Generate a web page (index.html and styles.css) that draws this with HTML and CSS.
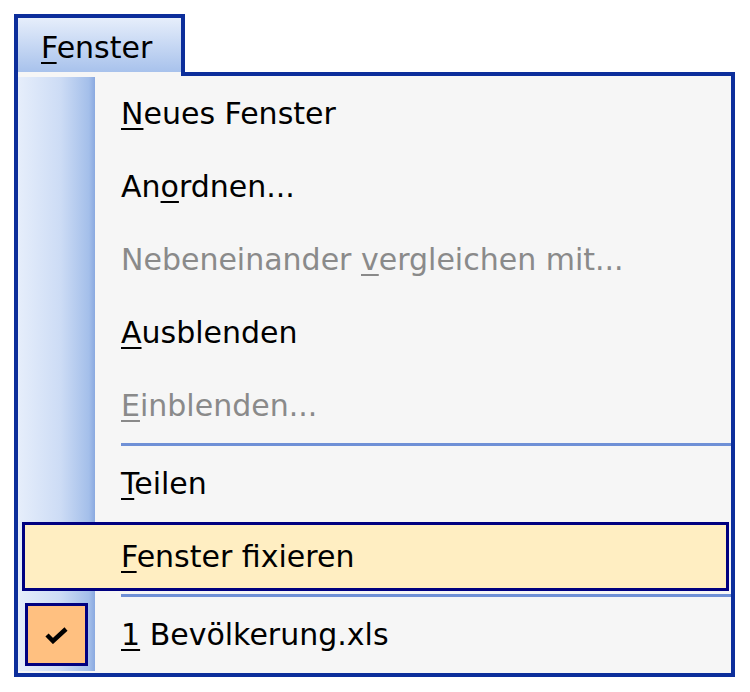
FILE: index.html
```html
<!DOCTYPE html>
<html lang="de">
<head>
    <meta charset="UTF-8">
    <title>Fenster-Menü</title>
    <link rel="stylesheet" href="styles.css">
</head>
<body>
    <div class="menubar">
        <div class="tab"><u>F</u>enster</div>
    </div>

    <div class="menu">
        <ul class="items">
            <li class="item"><span class="icon-cell"></span><span><u>N</u>eues Fenster</span></li>
            <li class="item"><span class="icon-cell"></span><span>An<u>o</u>rdnen...</span></li>
            <li class="item disabled"><span class="icon-cell"></span><span>Nebeneinander <u>v</u>ergleichen mit...</span></li>
            <li class="item"><span class="icon-cell"></span><span><u>A</u>usblenden</span></li>
            <li class="item disabled"><span class="icon-cell"></span><span><u>E</u>inblenden...</span></li>
            <li class="separator"></li>
            <li class="item"><span class="icon-cell"></span><span><u>T</u>eilen</span></li>
            <li class="item active"><span class="icon-cell"></span><span><u>F</u>enster fixieren</span></li>
            <li class="separator"></li>
            <li class="item">
                <span class="icon-cell checked">
                    <svg width="23" height="18" viewBox="0 0 23 18">
                        <path d="M2 9 L8 15 L21 3" fill="none" stroke="#000" stroke-width="4.5"/>
                    </svg>
                </span>
                <span><u>1</u> Bevölkerung.xls</span>
            </li>
        </ul>
    </div>
</body>
</html>
```

FILE: styles.css
```css
body {
    margin: 0;
    padding: 14px;
    background-color: #ffffff;
    font-family: "DejaVu Sans", Verdana, sans-serif;
    font-size: 30px;
    color: #000;
}
u {
    text-decoration-thickness: 2px;
    text-underline-offset: 4px;
}
.menubar {
    display: flex;
}
.tab {
    position: relative;
    z-index: 1;
    box-sizing: border-box;
    width: 171px;
    height: 62px;
    margin-bottom: -4px;
    padding: 12px 0 0 23px;
    border: 4px solid #0c2e9b;
    border-bottom: none;
    /* bottom 4px stays light so the tab opens into the menu */
    background: linear-gradient(#e6eefb, #a8c2ec calc(100% - 4px), #f6f6f6 calc(100% - 4px));
}
.menu {
    box-sizing: border-box;
    width: 721px;
    height: 605px;
    border: 4px solid #0c2e9b;
    background-color: #f6f6f6;
}
.items {
    display: flex;
    flex-direction: column;
    list-style: none;
    margin: 0;
    padding: 1px 0 2px 0;
    /* blue icon gutter on the left */
    background: linear-gradient(to right, #e6eefb, #cddcf5 55%, #a4bfea 92%, #8aa9e0) no-repeat;
    background-size: 77px calc(100% - 3px);
    background-position: 0 1px;
}
.item {
    box-sizing: border-box;
    display: flex;
    align-items: center;
    height: 69px;
    margin: 2px 2px 2px 4px;
    border: 3px solid transparent;
    white-space: nowrap;
}
.item.disabled {
    color: #8a8a8a;
}
.item.active {
    border-color: #000080;
    background-color: #ffeec2;
}
.icon-cell {
    flex: none;
    width: 63px;
    height: 63px;
    margin-right: 33px;
    box-sizing: border-box;
    display: flex;
    align-items: center;
    justify-content: center;
}
.icon-cell.checked {
    border: 3px solid #000080;
    background-color: #ffc080;
}
.separator {
    height: 3px;
    margin: 1px 0 1px 103px;
    background-color: #6f90d6;
}
```
